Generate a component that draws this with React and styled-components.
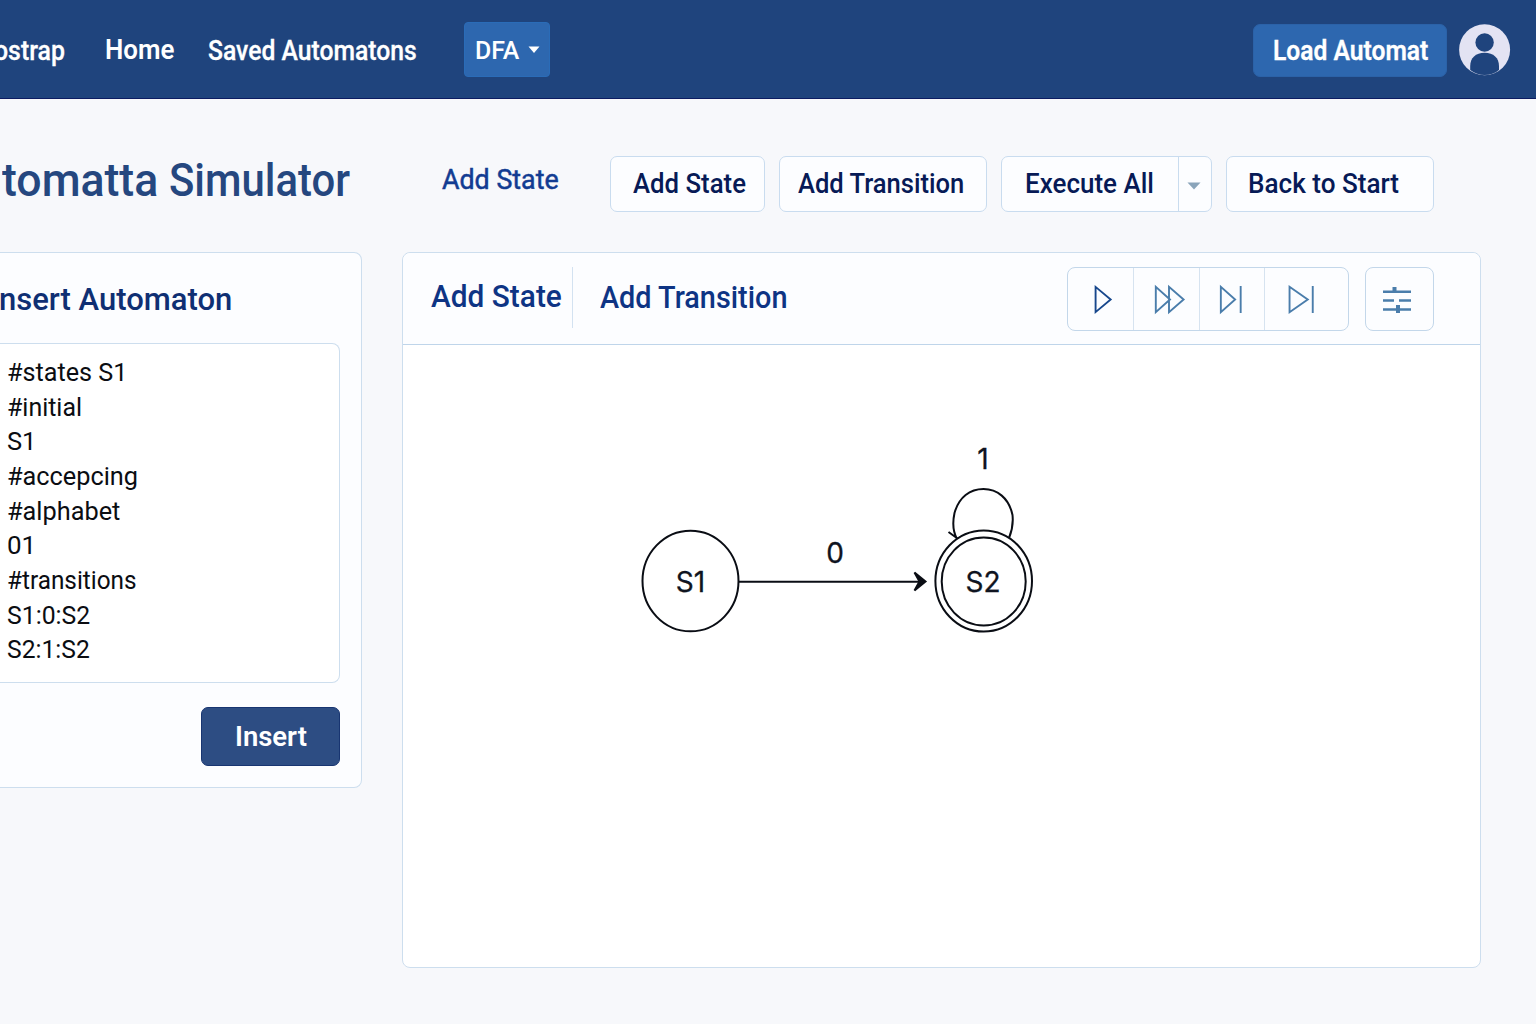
import React from "react";
import styled, { createGlobalStyle } from "styled-components";

const GlobalStyle = createGlobalStyle`
  * { box-sizing: border-box; }
  body {
    margin: 0;
    background: #f7f8fb;
    font-family: Roboto, "Liberation Sans", Arial, sans-serif;
    overflow: hidden;
  }
  button {
    font-family: inherit;
    margin: 0;
    padding: 0;
    cursor: pointer;
  }
`;

const Page = styled.div`
  width: 1536px;
  height: 1024px;
  overflow: hidden;
  display: flex;
  flex-direction: column;
`;

const Label = styled.span`
  display: inline-block;
  font-size: ${(p) => p.$size}px;
  font-weight: ${(p) => p.$weight || 500};
  color: ${(p) => p.$color || "inherit"};
  line-height: 1.2;
  white-space: nowrap;
  transform: scaleX(${(p) => p.$squeeze || 1});
  transform-origin: left center;
  -webkit-text-stroke: ${(p) => p.$stroke || 0}px currentColor;
`;

const Navbar = styled.header`
  height: 99px;
  flex: none;
  display: flex;
  align-items: flex-start;
  background: #1f447d;
  border-bottom: 1px solid #0c1c62;
  color: #fff;
`;

const NavLinks = styled.nav`
  display: flex;
  align-items: center;
  height: 98px;
  padding-top: 4px;
`;

const NavItem = styled.a`
  display: flex;
  flex: none;
  width: ${(p) => p.$width}px;
  margin-left: ${(p) => p.$offset || 0}px;
  padding-bottom: ${(p) => p.$lift || 0}px;
`;

const DropdownButton = styled.button`
  display: flex;
  align-items: center;
  gap: 6px;
  width: 86px;
  height: 55px;
  margin-top: 22px;
  padding: 0 0 0 10px;
  color: #fff;
  background: #2d67af;
  border: 1px solid #2a6cb8;
  border-radius: 4px;
`;

const LoadButton = styled.button`
  width: 194px;
  height: 53px;
  margin: 24px 12px 0 auto;
  padding: 1px 0 0 19px;
  text-align: left;
  color: #fff;
  background: #2d67af;
  border: 1px solid #2b62a8;
  border-radius: 7px;
`;

const Avatar = styled.svg`
  width: 52px;
  height: 52px;
  margin: 24px 25px 0 0;
`;

const TitleRow = styled.div`
  display: flex;
  flex: none;
  align-items: flex-start;
  height: 153px;
  padding-top: 57px;
`;

const PageTitle = styled.h1`
  display: flex;
  gap: 8px;
  width: 440px;
  margin: -2px 0 0;
  padding-left: 2px;
  line-height: 1;
  font-weight: 500;
`;

const TextLink = styled.a`
  width: 170px;
  margin-top: 7px;
  padding-left: 2px;
`;

const Actions = styled.div`
  display: flex;
  gap: 14px;
`;

const ActionButton = styled.button`
  display: flex;
  align-items: center;
  width: ${(p) => p.$width}px;
  height: 56px;
  padding: 0 0 0 ${(p) => p.$inset}px;
  color: #071a56;
  background: #fcfdff;
  border: 1px solid #c9dcef;
  border-radius: 7px;
`;

const SplitButton = styled.div`
  display: flex;
  width: 211px;
  height: 56px;
  background: #fcfdff;
  border: 1px solid #c9dcef;
  border-radius: 7px;
`;

const SplitMain = styled.button`
  flex: 1;
  padding: 0 0 0 23px;
  text-align: left;
  color: #071a56;
  background: none;
  border: 0;
`;

const SplitCaret = styled.button`
  display: flex;
  align-items: center;
  justify-content: center;
  width: 33px;
  padding: 4px 3px 0 0;
  background: none;
  border: 0;
  border-left: 1px solid #c9dcef;
`;

const Workspace = styled.main`
  display: flex;
  align-items: flex-start;
  gap: 40px;
`;

const InsertCard = styled.section`
  display: flex;
  flex-direction: column;
  width: 363px;
  height: 536px;
  margin-left: -1px;
  padding-right: 21px;
  background: #fcfdff;
  border: 1px solid #cddeee;
  border-left: 0;
  border-radius: 0 8px 8px 0;
`;

const CardTitle = styled.h2`
  display: flex;
  align-items: center;
  height: 90px;
  margin: 0;
  padding-top: 4px;
  color: #0f2f73;
`;

const Source = styled.div`
  height: 340px;
  padding: 10.5px 0 0 8px;
  background: #fff;
  border: 1px solid #cddeee;
  border-left: 0;
  border-radius: 0 8px 8px 0;
`;

const SourceLine = styled.div`
  display: flex;
  align-items: center;
  height: 34.7px;
  color: #0b0d12;
`;

const InsertButton = styled.button`
  align-self: flex-end;
  width: 139px;
  height: 59px;
  margin-top: 24px;
  padding-left: 33px;
  text-align: left;
  color: #fff;
  background: #2d4d83;
  border: 1px solid #183571;
  border-radius: 7px;
`;

const Panel = styled.section`
  display: flex;
  flex-direction: column;
  width: 1079px;
  height: 716px;
  background: #fff;
  border: 1px solid #cddeee;
  border-radius: 8px;
`;

const PanelHeader = styled.div`
  display: flex;
  flex: none;
  align-items: flex-start;
  height: 92px;
  padding-top: 14px;
  background: #fcfdff;
  border-bottom: 1px solid #bfd5ea;
  border-radius: 8px 8px 0 0;
`;

const Tab = styled.button`
  width: ${(p) => p.$width}px;
  height: 61px;
  padding: ${(p) => p.$drop}px 0 0 ${(p) => p.$inset}px;
  text-align: left;
  color: #0e3484;
  background: none;
  border: 0;
  border-right: ${(p) => (p.$divided ? "1px solid #d3e2f1" : "0")};
`;

const IconGroup = styled.div`
  display: flex;
  height: 64px;
  margin: 0 16px 0 auto;
  border: 1px solid #c3d7ea;
  border-radius: 8px;
`;

const IconButton = styled.button`
  width: ${(p) => p.$width}px;
  background: none;
  border: 0;
  border-left: ${(p) => (p.$first ? "0" : "1px solid #d6e3f0")};
`;

const SettingsButton = styled.button`
  width: 69px;
  height: 64px;
  margin-right: 46px;
  background: none;
  border: 1px solid #c3d7ea;
  border-radius: 8px;
`;

const Icon = styled.svg`
  display: block;
  width: 100%;
  height: 62px;
  fill: none;
  stroke: ${(p) => p.$stroke || "#4a7dab"};
  stroke-width: 1.9;
`;

const Diagram = styled.svg`
  display: block;
  flex: 1;
  width: 100%;
  fill: none;
  stroke: #0a0d14;
  stroke-width: 2;

  text {
    fill: #0f1420;
    stroke: #0f1420;
    stroke-width: 0.3px;
    font-family: Inter, Roboto, sans-serif;
    font-size: 28px;
    text-anchor: middle;
  }
`;

const SOURCE = [
  ["#states S1", 0.95],
  ["#initial", 0.94],
  ["S1", 0.96],
  ["#accepcing", 0.955],
  ["#alphabet", 0.955],
  ["01", 0.98],
  ["#transitions", 0.918],
  ["S1:0:S2", 0.935],
  ["S2:1:S2", 0.93],
];

export default function App() {
  return (
    <Page>
      <GlobalStyle />
      <Navbar>
        <NavLinks>
          <NavItem $width={110.5} $offset={-6}>
            <Label $size={27} $squeeze={0.92} $stroke={0.3}>ostrap</Label>
          </NavItem>
          <NavItem $width={103.5} $lift={2}>
            <Label $size={28} $weight={600} $squeeze={0.925}>Home</Label>
          </NavItem>
          <NavItem $width={256}>
            <Label $size={27} $squeeze={0.915} $stroke={0.3}>Saved Automatons</Label>
          </NavItem>
        </NavLinks>
        <DropdownButton>
          <Label $size={26.5} $squeeze={0.94}>DFA</Label>
          <svg width="12" height="8" viewBox="0 0 12 8">
            <path d="M.5.5H11.5L6 7Z" fill="#fff" />
          </svg>
        </DropdownButton>
        <LoadButton>
          <Label $size={27} $weight={600} $squeeze={0.912} $stroke={0.3}>Load Automat</Label>
        </LoadButton>
        <Avatar viewBox="0 0 52 52">
          <circle cx="25.6" cy="25.8" r="25.5" fill="#e3e3f3" />
          <circle cx="25.6" cy="18.5" r="9.2" fill="#1f447d" />
          <path d="M11.2 46V42C11.2 34 16.7 28.7 25.6 28.7S40 34 40 42V46C36 49.5 31 51 25.6 51S16 49.5 11.2 46Z" fill="#1f447d" />
        </Avatar>
      </Navbar>

      <TitleRow>
        <PageTitle>
          <Label $size={45.5} $squeeze={0.98} $color="#25477f">tomatta</Label>
          <Label $size={45.5} $squeeze={0.92} $color="#25477f">Simulator</Label>
        </PageTitle>
        <TextLink>
          <Label $size={27.5} $weight={400} $squeeze={0.975} $stroke={0.5} $color="#123c92">Add State</Label>
        </TextLink>
        <Actions>
          <ActionButton $width={155} $inset={22}>
            <Label $size={28} $squeeze={0.92}>Add State</Label>
          </ActionButton>
          <ActionButton $width={208} $inset={18}>
            <Label $size={28} $squeeze={0.913}>Add Transition</Label>
          </ActionButton>
          <SplitButton>
            <SplitMain>
              <Label $size={28} $squeeze={0.928}>Execute All</Label>
            </SplitMain>
            <SplitCaret>
              <svg width="14" height="8" viewBox="0 0 14 8">
                <path d="M.5.5H13.5L7 7.5Z" fill="#8aa4ba" />
              </svg>
            </SplitCaret>
          </SplitButton>
          <ActionButton $width={208} $inset={20.5}>
            <Label $size={28} $squeeze={0.932}>Back to Start</Label>
          </ActionButton>
        </Actions>
      </TitleRow>

      <Workspace>
        <InsertCard>
          <CardTitle>
            <Label $size={31}>nsert Automaton</Label>
          </CardTitle>
          <Source>
            {SOURCE.map(([line, squeeze]) => (
              <SourceLine key={line}>
                <Label $size={26.5} $weight={400} $squeeze={squeeze}>{line}</Label>
              </SourceLine>
            ))}
          </Source>
          <InsertButton>
            <Label $size={28} $weight={600} $squeeze={0.98}>Insert</Label>
          </InsertButton>
        </InsertCard>

        <Panel>
          <PanelHeader>
            <Tab $width={170} $inset={28} $drop={0} $divided>
              <Label $size={30.5} $squeeze={0.978}>Add State</Label>
            </Tab>
            <Tab $width={240} $inset={27} $drop={2}>
              <Label $size={30.5} $squeeze={0.945}>Add Transition</Label>
            </Tab>
            <IconGroup>
              <IconButton $width={65.5} $first>
                <Icon viewBox="0 0 66 62" $stroke="#17478c">
                  <path d="M27.8 18.8V44.2L43 31.5Z" />
                </Icon>
              </IconButton>
              <IconButton $width={66}>
                <Icon viewBox="0 0 65 62">
                  <path d="M21.8 18.8V44.2L36 31.5ZM35 18.8V44.2L49.6 31.5Z" />
                </Icon>
              </IconButton>
              <IconButton $width={64.5}>
                <Icon viewBox="0 0 64 62">
                  <path d="M21 18.8V44.2L35.4 31.5ZM41 18V45" />
                </Icon>
              </IconButton>
              <IconButton $width={84.5}>
                <Icon viewBox="0 0 83 62">
                  <path d="M24.3 18.8V44.2L42.5 31.5ZM47.5 18V45" />
                </Icon>
              </IconButton>
            </IconGroup>
            <SettingsButton>
              <Icon viewBox="0 0 67 62">
                <path d="M17 23.7H45M17 32.5H28M33 32.5H45M17 41.5H45" strokeWidth="2.6" />
                <path d="M28.5 19V24M32 37V45" strokeWidth="4" />
              </Icon>
            </SettingsButton>
          </PanelHeader>
          <Diagram viewBox="403 345 1077 622">
            <ellipse cx="690.5" cy="581" rx="48" ry="50.3" />
            <path d="M739 581.7H920" />
            <path d="M914.5 572.5L925.5 581.5L914.5 590.5L919.5 581.5Z" fill="#0a0d14" />
            <path d="M957 539C952 530 953 520 954.5 513C959 497 970 489 983.5 489S1009 498 1012.5 515C1013.5 524 1011.5 532 1009 538M948.5 532L957.5 538.5" />
            <ellipse cx="983.7" cy="581" rx="48.3" ry="50.6" />
            <ellipse cx="983.7" cy="581.5" rx="42" ry="44" />
            <text x="690.5" y="592">S1</text>
            <text x="983" y="592">S2</text>
            <text x="835" y="563">0</text>
            <text x="983" y="469">1</text>
          </Diagram>
        </Panel>
      </Workspace>
    </Page>
  );
}
